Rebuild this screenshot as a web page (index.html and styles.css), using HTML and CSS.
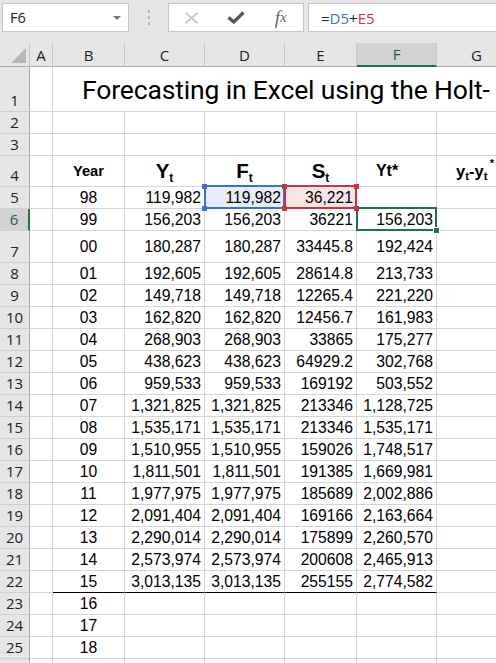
FILE: index.html
```html
<!DOCTYPE html>
<html>
<head>
  <meta charset="utf-8">
  <link rel="stylesheet" href="styles.css">
</head>
<body>
  <!-- Formula bar -->
  <div class="formula-bar">
    <div class="name-box">
      <span>F6</span>
      <span class="dropdown"></span>
    </div>
    <div class="grip"><i></i><i></i><i></i></div>
    <div class="fx-buttons">
      <span>
        <svg width="15" height="12" viewBox="0 0 15 12"><path d="M1.5 0.8 L13.5 11.2 M13.5 0.8 L1.5 11.2" stroke="#c3c3c3" stroke-width="1.7" fill="none"/></svg>
      </span>
      <span>
        <svg width="18" height="13" viewBox="0 0 18 13"><path d="M1.5 6.5 L6.8 11 L16.5 1.5" stroke="#555" stroke-width="3.2" fill="none"/></svg>
      </span>
      <span class="fx">f<small>x</small></span>
    </div>
    <div class="formula-input">=<span class="ref-blue">D5</span>+<span class="ref-red">E5</span></div>
  </div>

  <!-- Worksheet -->
  <div class="sheet">
    <div class="row head">
      <div class="corner"><span class="tri"></span></div>
      <div class="ch">A</div>
      <div class="ch">B</div>
      <div class="ch">C</div>
      <div class="ch">D</div>
      <div class="ch">E</div>
      <div class="ch sel">F</div>
      <div class="ch">G</div>
    </div>

    <div class="row r1">
      <div class="rh">1</div>
      <div class="c"></div>
      <div class="c title">Forecasting in Excel using the Holt-</div>
    </div>

    <div class="row">
      <div class="rh">2</div>
      <div class="c"></div><div class="c"></div><div class="c"></div><div class="c"></div><div class="c"></div><div class="c"></div><div class="c"></div>
    </div>

    <div class="row">
      <div class="rh">3</div>
      <div class="c"></div><div class="c"></div><div class="c"></div><div class="c"></div><div class="c"></div><div class="c"></div><div class="c"></div>
    </div>

    <div class="row r4">
      <div class="rh">4</div>
      <div class="c"></div>
      <div class="c hdr"><span>Year</span></div>
      <div class="c hdr big"><span>Y<sub>t</sub></span></div>
      <div class="c hdr big"><span>F<sub>t</sub></span></div>
      <div class="c hdr big"><span>S<sub>t</sub></span></div>
      <div class="c hdr star"><span>Yt*</span></div>
      <div class="c hdr diff"><span>y<sub>t</sub>-y<sub>t</sub><sup>*</sup></span></div>
    </div>

    <div class="row">
      <div class="rh">5</div>
      <div class="c"></div>
      <div class="c y">98</div>
      <div class="c n">119,982</div>
      <div class="c n ref-b">119,982<i class="hd tl"></i><i class="hd tr"></i><i class="hd bl"></i><i class="hd br"></i></div>
      <div class="c n ref-r">36,221<i class="hd tl"></i><i class="hd tr"></i><i class="hd bl"></i><i class="hd br"></i></div>
      <div class="c"></div>
      <div class="c"></div>
    </div>

    <div class="row">
      <div class="rh sel">6</div>
      <div class="c"></div>
      <div class="c y">99</div>
      <div class="c n">156,203</div>
      <div class="c n">156,203</div>
      <div class="c n">36221</div>
      <div class="c n active">156,203<i class="fill"></i></div>
      <div class="c"></div>
    </div>

    <div class="row r7">
      <div class="rh">7</div>
      <div class="c"></div>
      <div class="c y">00</div>
      <div class="c n">180,287</div>
      <div class="c n">180,287</div>
      <div class="c n">33445.8</div>
      <div class="c n">192,424</div>
      <div class="c"></div>
    </div>

    <div class="row">
      <div class="rh">8</div>
      <div class="c"></div>
      <div class="c y">01</div>
      <div class="c n">192,605</div>
      <div class="c n">192,605</div>
      <div class="c n">28614.8</div>
      <div class="c n">213,733</div>
      <div class="c"></div>
    </div>

    <div class="row">
      <div class="rh">9</div>
      <div class="c"></div>
      <div class="c y">02</div>
      <div class="c n">149,718</div>
      <div class="c n">149,718</div>
      <div class="c n">12265.4</div>
      <div class="c n">221,220</div>
      <div class="c"></div>
    </div>

    <div class="row">
      <div class="rh">10</div>
      <div class="c"></div>
      <div class="c y">03</div>
      <div class="c n">162,820</div>
      <div class="c n">162,820</div>
      <div class="c n">12456.7</div>
      <div class="c n">161,983</div>
      <div class="c"></div>
    </div>

    <div class="row">
      <div class="rh">11</div>
      <div class="c"></div>
      <div class="c y">04</div>
      <div class="c n">268,903</div>
      <div class="c n">268,903</div>
      <div class="c n">33865</div>
      <div class="c n">175,277</div>
      <div class="c"></div>
    </div>

    <div class="row">
      <div class="rh">12</div>
      <div class="c"></div>
      <div class="c y">05</div>
      <div class="c n">438,623</div>
      <div class="c n">438,623</div>
      <div class="c n">64929.2</div>
      <div class="c n">302,768</div>
      <div class="c"></div>
    </div>

    <div class="row">
      <div class="rh">13</div>
      <div class="c"></div>
      <div class="c y">06</div>
      <div class="c n">959,533</div>
      <div class="c n">959,533</div>
      <div class="c n">169192</div>
      <div class="c n">503,552</div>
      <div class="c"></div>
    </div>

    <div class="row">
      <div class="rh">14</div>
      <div class="c"></div>
      <div class="c y">07</div>
      <div class="c n">1,321,825</div>
      <div class="c n">1,321,825</div>
      <div class="c n">213346</div>
      <div class="c n">1,128,725</div>
      <div class="c"></div>
    </div>

    <div class="row">
      <div class="rh">15</div>
      <div class="c"></div>
      <div class="c y">08</div>
      <div class="c n">1,535,171</div>
      <div class="c n">1,535,171</div>
      <div class="c n">213346</div>
      <div class="c n">1,535,171</div>
      <div class="c"></div>
    </div>

    <div class="row">
      <div class="rh">16</div>
      <div class="c"></div>
      <div class="c y">09</div>
      <div class="c n">1,510,955</div>
      <div class="c n">1,510,955</div>
      <div class="c n">159026</div>
      <div class="c n">1,748,517</div>
      <div class="c"></div>
    </div>

    <div class="row">
      <div class="rh">17</div>
      <div class="c"></div>
      <div class="c y">10</div>
      <div class="c n">1,811,501</div>
      <div class="c n">1,811,501</div>
      <div class="c n">191385</div>
      <div class="c n">1,669,981</div>
      <div class="c"></div>
    </div>

    <div class="row">
      <div class="rh">18</div>
      <div class="c"></div>
      <div class="c y">11</div>
      <div class="c n">1,977,975</div>
      <div class="c n">1,977,975</div>
      <div class="c n">185689</div>
      <div class="c n">2,002,886</div>
      <div class="c"></div>
    </div>

    <div class="row">
      <div class="rh">19</div>
      <div class="c"></div>
      <div class="c y">12</div>
      <div class="c n">2,091,404</div>
      <div class="c n">2,091,404</div>
      <div class="c n">169166</div>
      <div class="c n">2,163,664</div>
      <div class="c"></div>
    </div>

    <div class="row">
      <div class="rh">20</div>
      <div class="c"></div>
      <div class="c y">13</div>
      <div class="c n">2,290,014</div>
      <div class="c n">2,290,014</div>
      <div class="c n">175899</div>
      <div class="c n">2,260,570</div>
      <div class="c"></div>
    </div>

    <div class="row">
      <div class="rh">21</div>
      <div class="c"></div>
      <div class="c y">14</div>
      <div class="c n">2,573,974</div>
      <div class="c n">2,573,974</div>
      <div class="c n">200608</div>
      <div class="c n">2,465,913</div>
      <div class="c"></div>
    </div>

    <div class="row">
      <div class="rh">22</div>
      <div class="c"></div>
      <div class="c y last">15</div>
      <div class="c n last">3,013,135</div>
      <div class="c n last">3,013,135</div>
      <div class="c n last">255155</div>
      <div class="c n last">2,774,582</div>
      <div class="c"></div>
    </div>

    <div class="row">
      <div class="rh">23</div>
      <div class="c"></div>
      <div class="c y">16</div>
      <div class="c"></div><div class="c"></div><div class="c"></div><div class="c"></div><div class="c"></div>
    </div>

    <div class="row">
      <div class="rh">24</div>
      <div class="c"></div>
      <div class="c y">17</div>
      <div class="c"></div><div class="c"></div><div class="c"></div><div class="c"></div><div class="c"></div>
    </div>

    <div class="row">
      <div class="rh">25</div>
      <div class="c"></div>
      <div class="c y">18</div>
      <div class="c"></div><div class="c"></div><div class="c"></div><div class="c"></div><div class="c"></div>
    </div>

    <div class="row">
      <div class="rh"></div>
      <div class="c"></div><div class="c"></div><div class="c"></div><div class="c"></div><div class="c"></div><div class="c"></div><div class="c"></div>
    </div>
  </div>
</body>
</html>
```

FILE: styles.css
```css
* {
  box-sizing: border-box;
}

body {
  margin: 0;
  width: 496px;
  height: 663px;
  overflow: hidden;
  background: #fff;
  font-family: "Liberation Sans", Arial, sans-serif;
  color: #000;
}

/* Formula bar */
.formula-bar {
  display: flex;
  height: 43px;
  padding: 3px 0 0 2px;
  background: #e6e6e6;
  font-family: "Open Sans", sans-serif;
}

.name-box {
  display: flex;
  align-items: center;
  justify-content: space-between;
  width: 127px;
  height: 29px;
  padding: 0 7px 0 7px;
  background: #fff;
  border: 1px solid #c6c6c6;
  font-size: 14.5px;
  color: #222;
}

.dropdown {
  width: 0;
  height: 0;
  border-left: 4px solid transparent;
  border-right: 4px solid transparent;
  border-top: 4px solid #777;
}

.grip {
  display: flex;
  flex-direction: column;
  align-items: center;
  gap: 3px;
  width: 39px;
  padding-top: 7px;
}

.grip i {
  width: 2px;
  height: 3px;
  background: #b4b4b4;
}

.fx-buttons {
  display: flex;
  width: 136px;
  height: 29px;
  background: #fff;
  border: 1px solid #c6c6c6;
}

.fx-buttons > span {
  flex: 1;
  display: flex;
  align-items: center;
  justify-content: center;
}

.fx {
  font-family: "Liberation Serif", serif;
  font-style: italic;
  font-size: 19px;
  color: #666;
}

.fx small {
  font-size: 15px;
}

.formula-input {
  flex: 1;
  display: flex;
  align-items: center;
  height: 29px;
  margin: 0 -4px 0 4px;
  padding-left: 12px;
  background: #fff;
  border: 1px solid #c6c6c6;
  font-size: 15px;
  color: #222;
}

.ref-blue { color: #3b70d1; }
.ref-red { color: #c8353f; }

/* Sheet grid */
.sheet {
  overflow: hidden;
}

.row {
  display: grid;
  grid-template-columns: 30px 23px 72px 80px 80px 72px 80px 80px;
  height: 22px;
}

.row.head { height: 24px; }
.row.r1 { height: 45px; }
.row.r4 { height: 31px; }
.row.r7 { height: 32px; }

.corner {
  display: flex;
  justify-content: flex-end;
  align-items: flex-end;
  padding: 0 3px 3px 0;
  background: #e6e6e6;
  border-right: 1px solid #c8c8c8;
  border-bottom: 1px solid #ababab;
}

.tri {
  width: 0;
  height: 0;
  border-left: 15px solid transparent;
  border-bottom: 15px solid #b7b7b7;
}

.ch {
  display: flex;
  align-items: center;
  justify-content: center;
  background: #e6e6e6;
  border-right: 1px solid #c8c8c8;
  border-bottom: 1px solid #ababab;
  font-family: "Open Sans", sans-serif;
  font-size: 15px;
  color: #222;
}

.ch.sel {
  background: #d2d2d2;
  border-bottom: 2px solid #217346;
  color: #1b5e38;
}

.rh {
  display: flex;
  align-items: flex-end;
  justify-content: center;
  padding-bottom: 1px;
  background: #e6e6e6;
  border-right: 1px solid #ababab;
  border-bottom: 1px solid #d0d0d0;
  font-family: "Open Sans", sans-serif;
  font-size: 15px;
  color: #222;
}

.rh.sel {
  background: #d2d2d2;
  border-right: 2px solid #217346;
  color: #1b5e38;
}

.c {
  display: flex;
  align-items: center;
  min-width: 0;
  padding: 0 3px;
  border-right: 1px solid #d4d4d4;
  border-bottom: 1px solid #d4d4d4;
  font-size: 15.7px;
  white-space: nowrap;
}

.c.y { justify-content: center; }
.c.n { justify-content: flex-end; }
.c.last { border-bottom-color: #000; }

.title {
  grid-column: 3 / -1;
  padding-left: 29px;
  font-family: Roboto, sans-serif;
  font-size: 26.5px;
  letter-spacing: -0.15px;
}

/* Column headings in row 4 */
.hdr {
  justify-content: center;
  font-weight: bold;
  font-size: 14.7px;
}

.hdr.big { font-size: 20.5px; }
.hdr.star { font-size: 16px; padding-right: 22px; }
.hdr.diff { font-size: 16.5px; padding-right: 6px; }

.hdr sub {
  font-size: 12px;
  line-height: 0;
  vertical-align: -4px;
}

.hdr.diff sub {
  font-size: 11.5px;
  vertical-align: -3px;
}

.hdr sup {
  font-size: 11px;
  line-height: 0;
  vertical-align: 10px;
  margin-left: 2px;
}

/* Selection and reference boxes */
.ref-b, .ref-r, .active {
  position: relative;
}

.ref-b { background: #e7eef9; }
.ref-r { background: #f8e6e7; }

.ref-b::after, .ref-r::after, .active::after {
  content: "";
  position: absolute;
  top: -2px;
  left: -1px;
  right: -1px;
  bottom: -1px;
  border: 2px solid #3b70d1;
}

.ref-r::after { border-color: #c8353f; }
.active::after { border-color: #217346; }

.hd {
  position: absolute;
  z-index: 1;
  width: 5px;
  height: 5px;
  background: #3b70d1;
}

.ref-r .hd { background: #c8353f; }

.hd.tl { top: -3px; left: -3px; }
.hd.tr { top: -3px; right: -3px; }
.hd.bl { bottom: -3px; left: -3px; }
.hd.br { bottom: -3px; right: -3px; }

.fill {
  position: absolute;
  z-index: 1;
  right: -4px;
  bottom: -4px;
  width: 7px;
  height: 7px;
  background: #217346;
  border: 1px solid #fff;
}
```
